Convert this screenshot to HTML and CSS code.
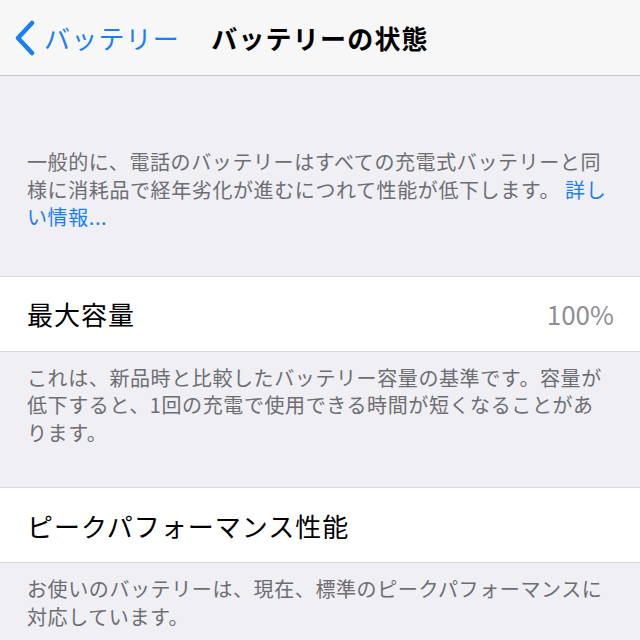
FILE: index.html
```html
<!DOCTYPE html>
<html lang="ja">
<head>
    <meta charset="UTF-8">
    <meta name="viewport" content="width=device-width, initial-scale=1.0">
    <title>バッテリーの状態</title>
    <link rel="stylesheet" href="styles.css">
</head>
<body>

<div class="nav-bar">
    <a class="back" href="#">
        <svg class="chevron" width="24" height="36" viewBox="0 0 24 36">
            <path d="M19 3 L5 18 L19 33" fill="none" stroke="#1a7ef5" stroke-width="4.5" stroke-linecap="round" stroke-linejoin="round"/>
        </svg>
        <span>バッテリー</span>
    </a>
    <h1 class="title">バッテリーの状態</h1>
    <div></div>
</div>

<div class="settings">
    <p class="footer footer-top">
        一般的に、電話のバッテリーはすべての充電式バッテリーと同<br>様に消耗品で経年劣化が進むにつれて性能が低下します。 <a href="#">詳し<br>い情報...</a>
    </p>

    <div class="cell">
        <span class="cell-label">最大容量</span>
        <span class="cell-value">100%</span>
    </div>
    <p class="footer">
        これは、新品時と比較したバッテリー容量の基準です。容量が<br>低下すると、1回の充電で使用できる時間が短くなることがあ<br>ります。
    </p>

    <div class="cell">
        <span class="cell-label">ピークパフォーマンス性能</span>
    </div>
    <p class="footer">
        お使いのバッテリーは、現在、標準のピークパフォーマンスに<br>対応しています。
    </p>
</div>

</body>
</html>
```

FILE: styles.css
```css
body {
    margin: 0;
    background-color: #efeff4;
    font-family: "Noto Sans CJK JP", "Noto Sans", sans-serif;
    color: #000000;
}
.nav-bar {
    height: 75px;
    background-color: #f7f7f7;
    border-bottom: 1px solid #c8c7cc;
    display: grid;
    grid-template-columns: 1fr auto 1fr;
    align-items: center;
}
.back {
    display: flex;
    align-items: center;
    padding-left: 13px;
    color: #1a7ef5;
    text-decoration: none;
    font-size: 26px;
    letter-spacing: 1.2px;
}
.back .chevron {
    margin-right: 7px;
}
.title {
    margin: 0;
    font-size: 26px;
    font-weight: bold;
    letter-spacing: 1.2px;
}
.footer {
    margin: 0;
    padding: 12px 20px 41px 27px;
    font-size: 20px;
    line-height: 27.5px;
    letter-spacing: 0.6px;
    color: #6d6d72;
}
.footer a {
    color: #1a7ef5;
    text-decoration: none;
}
.footer-top {
    padding-top: 72px;
    padding-bottom: 45px;
}
.cell {
    height: 74px;
    background-color: #ffffff;
    border-top: 1px solid #d8d8dc;
    border-bottom: 1px solid #d8d8dc;
    display: flex;
    align-items: center;
    justify-content: space-between;
    padding: 0 26px 0 27px;
    font-size: 26px;
}
.cell-label {
    letter-spacing: 1px;
}
.cell-value {
    color: #8e8e93;
}
```
